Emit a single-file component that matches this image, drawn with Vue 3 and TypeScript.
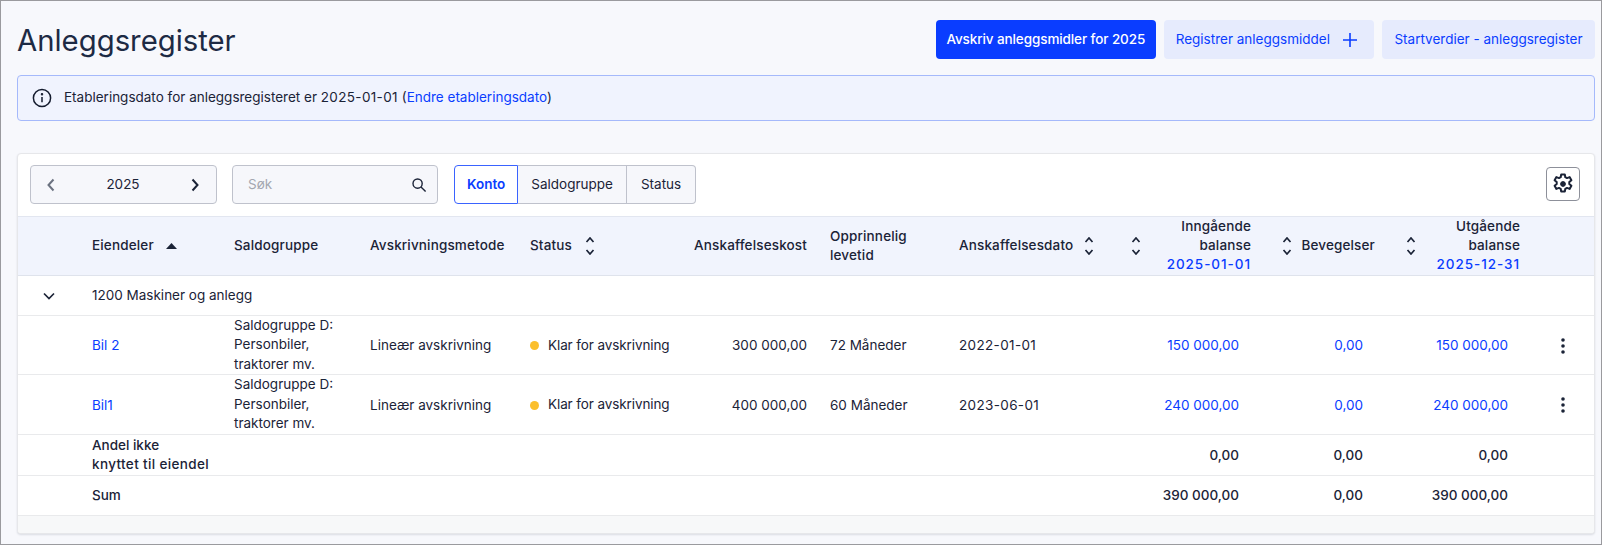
<script setup lang="ts">
interface Row { name: string; cost: string; life: string; date: string; inn: string; mov: string; out: string }
const rows: Row[] = [
  { name: 'Bil 2', cost: '300 000,00', life: '72 Måneder', date: '2022-01-01', inn: '150 000,00', mov: '0,00', out: '150 000,00' },
  { name: 'Bil1', cost: '400 000,00', life: '60 Måneder', date: '2023-06-01', inn: '240 000,00', mov: '0,00', out: '240 000,00' },
]
const tabs = ['Konto', 'Saldogruppe', 'Status']
</script>

<template>
  <div class="page">
    <header class="top">
      <h1>Anleggsregister</h1>
      <div class="actions">
        <button class="btn primary">Avskriv anleggsmidler for 2025</button>
        <button class="btn soft">
          Registrer anleggsmiddel
          <svg class="plus" viewBox="0 0 16 16" width="16" height="16"><path d="M8 1v14M1 8h14" stroke="currentColor" stroke-width="1.6" fill="none" /></svg>
        </button>
        <button class="btn soft start">Startverdier - anleggsregister</button>
      </div>
    </header>

    <div class="info">
      <svg viewBox="0 0 20 20" width="20" height="20" fill="none" stroke="#141b2e" stroke-width="1.5">
        <circle cx="10" cy="10" r="8.6" />
        <path d="M10 9v5.2" />
        <circle cx="10" cy="6.2" r=".5" fill="#141b2e" />
      </svg>
      <span>Etableringsdato for anleggsregisteret er <span class="date">2025-01-01</span> (<a>Endre etableringsdato</a>)</span>
    </div>

    <section class="card">
      <div class="toolbar">
        <div class="year">
          <svg class="dim" viewBox="0 0 10 16" width="10" height="16"><path d="M7.5 2.5 2.5 8l5 5.5" fill="none" stroke="currentColor" stroke-width="2" /></svg>
          <span>2025</span>
          <svg viewBox="0 0 10 16" width="10" height="16"><path d="M2.5 2.5 7.5 8l-5 5.5" fill="none" stroke="currentColor" stroke-width="2" /></svg>
        </div>
        <div class="search">
          <span>Søk</span>
          <svg viewBox="0 0 16 16" width="16" height="16" fill="none" stroke="#1b2337" stroke-width="1.4"><circle cx="6.6" cy="6.6" r="4.6" /><path d="m10 10 4.6 4.6" /></svg>
        </div>
        <div class="tabs">
          <button v-for="(t, i) in tabs" :key="t" class="tab" :class="{ on: i === 0 }">{{ t }}</button>
        </div>
        <button class="gear" aria-label="Innstillinger">
          <svg viewBox="0 0 24 24" width="24" height="24" fill="none" stroke="#1b2337" stroke-width="2" stroke-linejoin="round">
            <path d="M10.2 2.5h3.6l.5 2.7 1.7.9 2.6-1 1.8 3.1-2.1 1.8v2l2.1 1.8-1.8 3.1-2.6-1-1.7.9-.5 2.7h-3.6l-.5-2.7-1.7-.9-2.6 1-1.8-3.1 2.1-1.8v-2L3.6 8.2l1.8-3.1 2.6 1 1.7-.9z" />
            <circle cx="12" cy="12" r="2.4" fill="#1b2337" stroke-width="1" />
          </svg>
        </button>
      </div>

      <table>
        <colgroup>
          <col class="c0" /><col class="c1" /><col class="c2" /><col class="c3" /><col class="c4" /><col class="c5" />
          <col class="c6" /><col class="c7" /><col class="c8" /><col class="c9" /><col class="c10" /><col />
        </colgroup>
        <thead>
          <tr>
            <th></th>
            <th>
              <span class="hd tight">Eiendeler
                <svg class="up" viewBox="0 0 11 6" width="11" height="6"><path d="M5.5 0 11 6H0z" fill="currentColor" /></svg>
              </span>
            </th>
            <th>Saldogruppe</th>
            <th>Avskrivningsmetode</th>
            <th>
              <span class="hd">Status
                <svg class="sort" viewBox="0 0 10 18" width="10" height="18"><path d="m1.5 5 3.5-4 3.5 4M1.5 13l3.5 4 3.5-4" fill="none" stroke="currentColor" stroke-width="1.7" /></svg>
              </span>
            </th>
            <th class="r">Anskaffelseskost</th>
            <th class="pad">Opprinnelig<br />levetid</th>
            <th>
              <span class="hd tighter">Anskaffelsesdato
                <svg class="sort" viewBox="0 0 10 18" width="10" height="18"><path d="m1.5 5 3.5-4 3.5 4M1.5 13l3.5 4 3.5-4" fill="none" stroke="currentColor" stroke-width="1.7" /></svg>
              </span>
            </th>
            <th>
              <div class="split">
                <svg class="sort" viewBox="0 0 10 18" width="10" height="18"><path d="m1.5 5 3.5-4 3.5 4M1.5 13l3.5 4 3.5-4" fill="none" stroke="currentColor" stroke-width="1.7" /></svg>
                <div class="r">Inngående<br />balanse<br /><a class="hdate">2025-01-01</a></div>
              </div>
            </th>
            <th>
              <div class="split wide">
                <svg class="sort" viewBox="0 0 10 18" width="10" height="18"><path d="m1.5 5 3.5-4 3.5 4M1.5 13l3.5 4 3.5-4" fill="none" stroke="currentColor" stroke-width="1.7" /></svg>
                <div>Bevegelser</div>
              </div>
            </th>
            <th>
              <div class="split wide">
                <svg class="sort" viewBox="0 0 10 18" width="10" height="18"><path d="m1.5 5 3.5-4 3.5 4M1.5 13l3.5 4 3.5-4" fill="none" stroke="currentColor" stroke-width="1.7" /></svg>
                <div class="r">Utgående<br />balanse<br /><a class="hdate">2025-12-31</a></div>
              </div>
            </th>
            <th></th>
          </tr>
        </thead>
        <tbody>
          <tr class="group">
            <td class="exp">
              <svg viewBox="0 0 14 10" width="14" height="10"><path d="m2 2.5 5 5 5-5" fill="none" stroke="currentColor" stroke-width="1.7" /></svg>
            </td>
            <td colspan="11">1200 Maskiner og anlegg</td>
          </tr>
          <tr v-for="row in rows" :key="row.name" class="item">
            <td></td>
            <td><a>{{ row.name }}</a></td>
            <td class="lines">Saldogruppe D:<br />Personbiler,<br />traktorer mv.</td>
            <td>Lineær avskrivning</td>
            <td><span class="status"><i></i>Klar for avskrivning</span></td>
            <td class="r">{{ row.cost }}</td>
            <td class="pad">{{ row.life }}</td>
            <td class="date">{{ row.date }}</td>
            <td class="num"><a>{{ row.inn }}</a></td>
            <td class="num"><a>{{ row.mov }}</a></td>
            <td class="num"><a>{{ row.out }}</a></td>
            <td class="more">
              <svg viewBox="0 0 4 16" width="4" height="16"><circle cx="2" cy="2" r="1.8" /><circle cx="2" cy="8" r="1.8" /><circle cx="2" cy="14" r="1.8" /></svg>
            </td>
          </tr>
          <tr class="total part">
            <td></td>
            <td class="two" colspan="7">Andel ikke<br /><span class="loose">knyttet til eiendel</span></td>
            <td class="num">0,00</td>
            <td class="num">0,00</td>
            <td class="num">0,00</td>
            <td></td>
          </tr>
          <tr class="total sum">
            <td></td>
            <td colspan="7">Sum</td>
            <td class="num">390 000,00</td>
            <td class="num">0,00</td>
            <td class="num">390 000,00</td>
            <td></td>
          </tr>
        </tbody>
      </table>
      <div class="foot"></div>
    </section>
  </div>
</template>

<style>
html, body { margin: 0; background: #f7f8fc; }
</style>

<style scoped>
.page {
  box-sizing: border-box;
  height: 545px;
  padding: 19px 6px 12px 16px;
  border: 1px solid #9a9a9e;
  background: #f7f8fc;
  color: #1b2337;
  font: 13.5px/19.5px Inter, "Noto Sans", sans-serif;
  overflow: hidden;
}
.top { display: flex; justify-content: space-between; align-items: flex-start; height: 40px; }
h1 { margin: 1px 0 0; font-size: 29.3px; line-height: 40px; font-weight: 400; color: #1d2a44; }
.actions { display: flex; gap: 8px; }
.btn {
  display: flex;
  align-items: center;
  gap: 12px;
  height: 39px;
  padding: 0 12px;
  border: 0;
  border-radius: 4px;
  font: inherit;
  white-space: nowrap;
}
.primary { padding: 0 10.5px; background: #0a3dff; color: #fff; font-weight: 500; letter-spacing: -.1px; }
.soft { background: #e6ebfd; color: #0a3dff; }
.start { padding: 0 12.5px; }
.plus { margin-right: 4px; color: #0a3dff; }
.info {
  display: flex;
  align-items: center;
  gap: 12px;
  height: 46px;
  margin-top: 15px;
  padding: 0 14px;
  box-sizing: border-box;
  border: 1px solid #a5b9fb;
  border-radius: 4px;
  background: #f0f3fe;
}
a { color: #0a3dff; }
.date { letter-spacing: .35px; }
.card {
  margin-top: 32px;
  border: 1px solid #e6e7ea;
  border-radius: 4px;
  background: #fff;
  box-shadow: 0 1px 2px rgba(20, 27, 46, .12);
  overflow: hidden;
}
.toolbar {
  display: flex;
  align-items: center;
  box-sizing: border-box;
  gap: 16px;
  height: 62px;
  padding: 0 14px 2px 12px;
}
.year, .search {
  display: flex;
  align-items: center;
  justify-content: space-between;
  box-sizing: border-box;
  height: 39px;
  border: 1px solid #bfc2cc;
  border-radius: 4px;
  background: #f6f7fb;
}
.year { width: 187px; margin-right: -1px; padding: 1px 16px 0 15px; }
.dim { color: #6b7280; }
.search { width: 206px; padding: 1px 10px 0 15px; color: #a4a7b0; }
.tabs { display: flex; height: 39px; }
.tab {
  padding: 1px 13px 0;
  border: 1px solid #bfc2cc;
  border-left: 0;
  background: #f6f7fb;
  color: #1b2337;
  font: inherit;
}
.tab:last-child { padding: 1px 14px 0; border-radius: 0 4px 4px 0; }
.tab.on {
  padding: 1px 12px 0;
  border: 1px solid #3a63ff;
  border-radius: 4px 0 0 4px;
  background: #fff;
  color: #0a3dff;
  font-weight: 600;
}
.gear {
  display: flex;
  align-items: center;
  justify-content: center;
  width: 34px;
  height: 34px;
  margin-left: auto;
  padding: 0;
  border: 1px solid #8d909a;
  border-radius: 4px;
  background: #fff;
}
table { width: 100%; border-collapse: collapse; table-layout: fixed; }
.c0 { width: 74px; }
.c1 { width: 142px; }
.c2 { width: 136px; }
.c3 { width: 160px; }
.c4 { width: 160px; }
.c5 { width: 117px; }
.c6 { width: 152px; }
.c7 { width: 165px; }
.c8 { width: 127px; }
.c9 { width: 124px; }
.c10 { width: 145px; }
th, td { padding: 0; text-align: left; white-space: nowrap; }
td { padding-top: 2px; }
td.lines { padding-top: 0; }
td.two { padding-top: 1px; }
th { font-weight: 500; letter-spacing: .15px; line-height: 19.2px; }
thead tr {
  height: 58px;
  background: #f1f4fd;
  border-top: 1px solid #e2e6f0;
  border-bottom: 1px solid #dfe3ec;
}
tbody tr { border-bottom: 1px solid #e9eaec; }
.group { height: 40px; }
.item { height: 59.5px; }
.part { height: 40px; }
.sum { height: 40px; }
.total td { font-weight: 500; }
.loose { letter-spacing: .35px; }
td.exp { padding-left: 24px; }
.exp svg { display: block; }
th.r { text-align: right; }
td.r { text-align: right; }
div.r { text-align: right; }
.hdate { letter-spacing: .95px; }
th.pad, td.pad { padding-left: 23px; }
td.num { padding-right: 12px; text-align: right; }
td.more { padding-left: 41px; }
.more svg { display: block; fill: #1b2337; }
.hd { display: inline-flex; align-items: center; gap: 13px; }
.hd.tight { gap: 12px; }
.hd.tighter { gap: 11px; }
.sort { flex: none; }
.split { display: flex; align-items: center; justify-content: space-between; padding-left: 7px; }
.split.wide { padding-left: 31px; }
.status { display: inline-flex; align-items: center; letter-spacing: -.1px; }
.status i { width: 9px; height: 9px; margin-right: 9px; border-radius: 50%; background: #fbbf2d; }
.foot { height: 17px; background: #f7f8f9; }
</style>
